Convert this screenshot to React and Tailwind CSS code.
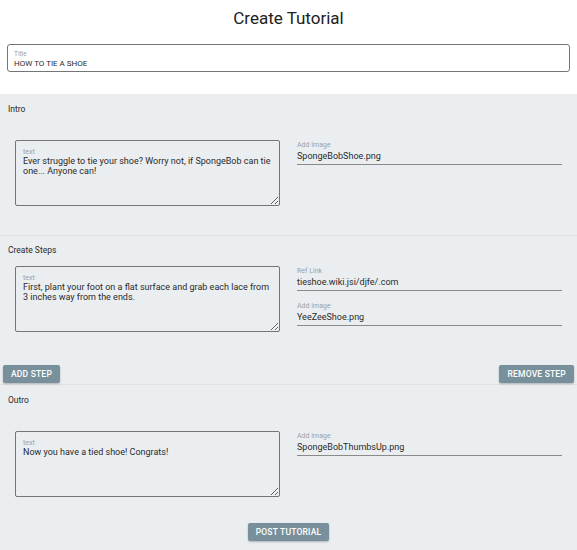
import React from "react";

const font = { fontFamily: "Roboto, 'Noto Sans', sans-serif" };

function TextBox({ value, className = "" }) {
  return (
    <div
      className={`resize overflow-auto border border-[#757575] rounded-[2px] px-[7px] pt-[7px] ${className}`}
    >
      <div className="text-[7px] leading-[9px] text-[#9e9e9e]">text</div>
      <div className="text-[9px] leading-[9.5px] text-[#2a2a2a]">{value}</div>
    </div>
  );
}

function LineField({ label, value }) {
  return (
    <div className="border-b border-[#8a8a8a] pb-[2px]">
      <div className="text-[7px] leading-[9px] text-[#9e9e9e]">{label}</div>
      <div className="text-[9px] leading-[12px] text-[#2a2a2a]">{value}</div>
    </div>
  );
}

function Button({ children }) {
  return (
    <button className="h-[18px] px-[8px] bg-[#78909c] text-white text-[8.5px] font-medium tracking-[0.2px] rounded-[2px] shadow-[0_1px_2px_rgba(0,0,0,0.25)]">
      {children}
    </button>
  );
}

export default function App() {
  return (
    <div style={font} className="w-[577px] h-[550px] bg-white overflow-hidden">
      {/* Header */}
      <div className="h-[94px] px-[7px] pt-[7px]">
        <h1 className="text-center text-[17px] leading-[22px] text-[#212121]">
          Create Tutorial
        </h1>
        <div className="mt-[15px] h-[28px] border border-[#757575] rounded-[3px] px-[6px] pt-[5px]">
          <div className="text-[6.5px] leading-[9px] text-[#9e9e9e]">Title</div>
          <div className="text-[8px] leading-[10px] text-[#2a2a2a]">HOW TO TIE A SHOE</div>
        </div>
      </div>

      <div className="bg-[#eaeef1] h-[456px]">
        {/* Intro */}
        <section className="h-[142px] border-b border-[#dfe3e6] pt-[10px]">
          <div className="px-[8px] text-[8.5px] leading-[10px] text-[#2a2a2a]">Intro</div>
          <div className="grid grid-cols-[265px_265px] gap-[17px] px-[15px] mt-[26px]">
            <TextBox
              className="h-[66px]"
              value="Ever struggle to tie your shoe? Worry not, if SpongeBob can tie one... Anyone can!"
            />
            <div className="pt-[1px]">
              <LineField label="Add Image" value="SpongeBobShoe.png" />
            </div>
          </div>
        </section>

        {/* Create Steps */}
        <section className="h-[149px] border-b border-[#dfe3e6] pt-[9px]">
          <div className="px-[8px] text-[8.5px] leading-[10px] text-[#2a2a2a]">Create Steps</div>
          <div className="grid grid-cols-[265px_265px] gap-[17px] px-[15px] mt-[11px]">
            <TextBox
              className="h-[66px]"
              value="First, plant your foot on a flat surface and grab each lace from 3 inches way from the ends."
            />
            <div className="flex flex-col gap-[11px] pt-[1px]">
              <LineField label="Ref Link" value="tieshoe.wiki.jsi/djfe/.com" />
              <LineField label="Add Image" value="YeeZeeShoe.png" />
            </div>
          </div>
          <div className="flex justify-between px-[3px] mt-[33px]">
            <Button>ADD STEP</Button>
            <Button>REMOVE STEP</Button>
          </div>
        </section>

        {/* Outro */}
        <section className="pt-[10px]">
          <div className="px-[8px] text-[8.5px] leading-[10px] text-[#2a2a2a]">Outro</div>
          <div className="grid grid-cols-[265px_265px] gap-[17px] px-[15px] mt-[26px]">
            <TextBox className="h-[66px]" value="Now you have a tied shoe! Congrats!" />
            <div className="pt-[1px]">
              <LineField label="Add Image" value="SpongeBobThumbsUp.png" />
            </div>
          </div>
          <div className="flex justify-center mt-[26px]">
            <Button>POST TUTORIAL</Button>
          </div>
        </section>
      </div>
    </div>
  );
}
